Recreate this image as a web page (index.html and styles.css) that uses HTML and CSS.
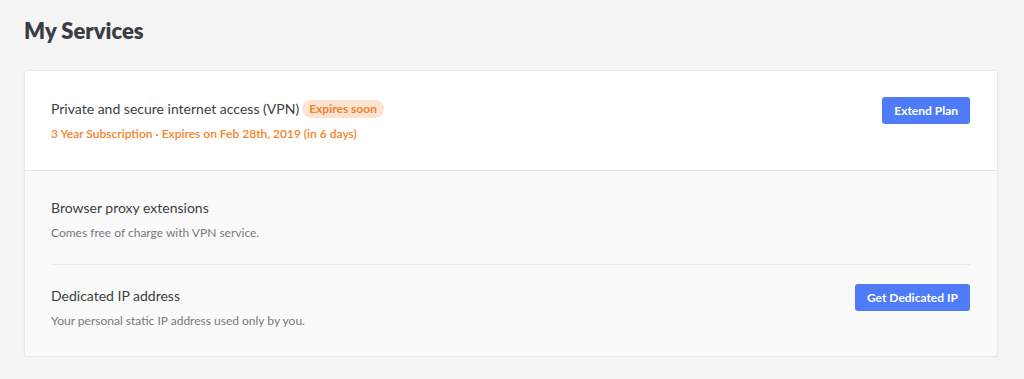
FILE: index.html
```html
<!DOCTYPE html>
<html>
<head>
<meta charset="utf-8">
<link rel="stylesheet" href="styles.css">
</head>
<body>
<div class="page">
  <h1 class="title">My Services</h1>
  <div class="card">
    <div class="section section-top">
      <div class="row">
        <div class="info">
          <div class="name">Private and secure internet access (VPN) <span class="badge">Expires soon</span></div>
          <div class="sub sub-warn">3 Year Subscription · Expires on Feb 28th, 2019 (in 6 days)</div>
        </div>
        <button class="btn">Extend Plan</button>
      </div>
    </div>
    <div class="section section-bottom">
      <div class="row row-first">
        <div class="info">
          <div class="name">Browser proxy extensions</div>
          <div class="sub">Comes free of charge with VPN service.</div>
        </div>
      </div>
      <div class="row row-last">
        <div class="info">
          <div class="name">Dedicated IP address</div>
          <div class="sub">Your personal static IP address used only by you.</div>
        </div>
        <button class="btn">Get Dedicated IP</button>
      </div>
    </div>
  </div>
</div>
</body>
</html>
```
FILE: styles.css
```css
html, body {
  margin: 0;
  padding: 0;
  background: #f5f5f5;
  font-family: "Lato", "Liberation Sans", sans-serif;
  color: #3b3e45;
}
.page {
  padding: 16px 26px 0 24px;
}
.title {
  margin: 0 0 24px 0;
  font-size: 22px;
  font-weight: 800;
  line-height: 30px;
  color: #3a3d45;
}
.card {
  background: #fafafa;
  border: 1px solid #e8e8e8;
  border-radius: 3px;
  box-shadow: 0 1px 2px rgba(0,0,0,0.06);
  overflow: hidden;
}
.section-top {
  background: #fff;
  border-bottom: 1px solid #e6e6e6;
  padding: 28px 27px 27px 26px;
}
.section-bottom {
  padding: 0 27px 0 26px;
}
.row {
  display: flex;
  align-items: flex-start;
  justify-content: space-between;
}
.row-first {
  padding: 27px 0 22px;
  border-bottom: 1px solid #e9e9e9;
}
.row-last {
  padding: 21px 0 26px;
}
.name {
  font-size: 14px;
  line-height: 20px;
  color: #3b3e45;
  display: flex;
  align-items: center;
}
.badge {
  display: inline-block;
  margin-left: 3px;
  background: #fde3d2;
  color: #f5821f;
  font-size: 12px;
  font-weight: 700;
  line-height: 18px;
  padding: 0 7px;
  border-radius: 9px;
}
.sub {
  margin-top: 6px;
  font-size: 12px;
  line-height: 18px;
  color: #77797d;
}
.sub-warn {
  color: #f5821f;
  font-weight: 600;
}
.btn {
  margin-top: -2px;
  background: #4f7bf7;
  color: #fff;
  border: none;
  border-radius: 3px;
  font-family: inherit;
  font-size: 12px;
  font-weight: 700;
  height: 27px;
  padding: 0 12px;
  cursor: pointer;
}
```
